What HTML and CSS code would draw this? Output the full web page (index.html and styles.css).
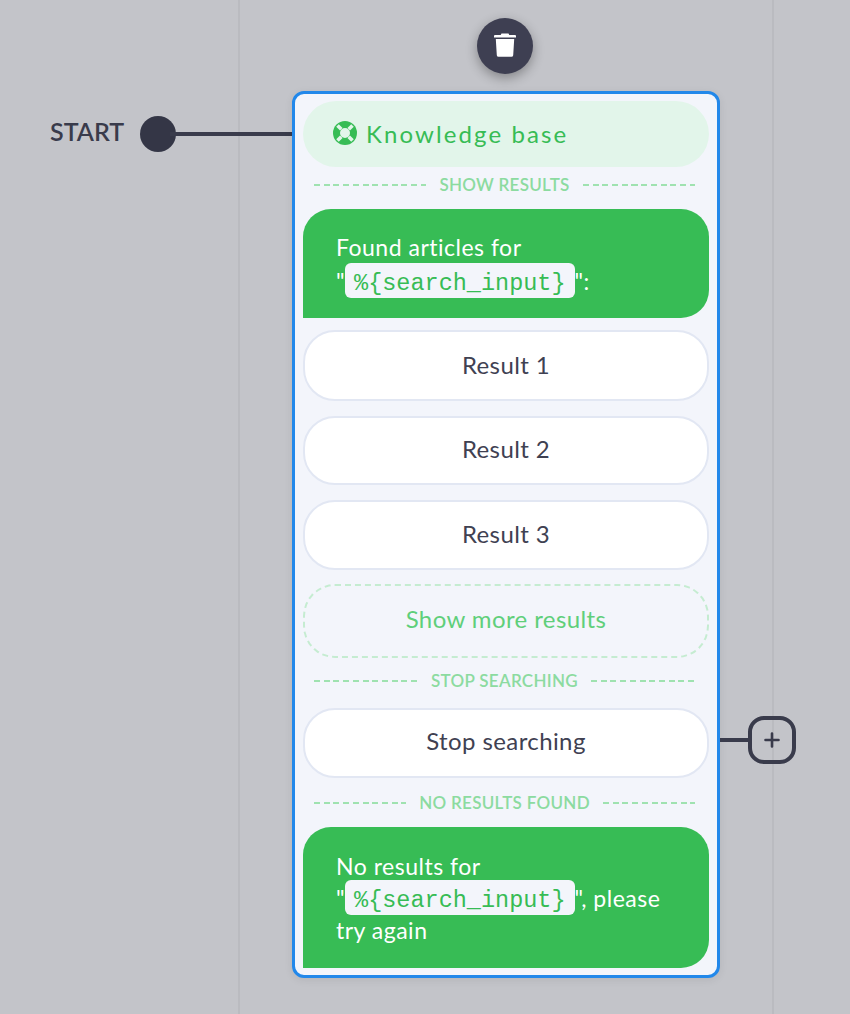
FILE: index.html
```html
<!DOCTYPE html>
<html lang="en">
<head>
    <meta charset="UTF-8">
    <meta name="viewport" content="width=device-width, initial-scale=1.0">
    <title>Knowledge base block</title>
    <link rel="stylesheet" href="styles.css">
</head>
<body>
    <div class="canvas">
        <div class="guide guide-left"></div>
        <div class="guide guide-right"></div>

        <button class="delete-btn" aria-label="Delete">
            <svg width="22" height="24" viewBox="0 0 22 24">
                <path fill="#fff" d="M7.500 0.500h7l.8 1.500H21a1 1 0 0 1 1 1v1.500H0V3a1 1 0 0 1 1-1h5.700z"/>
                <path fill="#fff" d="M1.800 6h18.400l-1 16.200a1.800 1.800 0 0 1-1.800 1.600H4.600a1.800 1.800 0 0 1-1.800-1.600z"/>
            </svg>
        </button>

        <div class="start-label">START</div>
        <div class="start-dot"></div>
        <div class="start-line"></div>

        <div class="node">
            <div class="node-title">
                <svg class="title-icon" width="24" height="24" viewBox="0 0 24 24">
                    <circle cx="12" cy="12" r="12" fill="#37bc55"/>
                    <path stroke="#e2f5ea" stroke-width="3.600" d="M4.500 4.500l3.800 3.800M19.500 4.500l-3.800 3.800M4.500 19.500l3.800-3.800M19.500 19.500l-3.800-3.800"/>
                    <circle cx="12" cy="12" r="5" fill="#e2f5ea"/>
                </svg>
                <span>Knowledge base</span>
            </div>

            <div class="divider divider-first"><span>SHOW RESULTS</span></div>

            <div class="message message-found">
                Found articles for<br>"<code>%{search_input}</code>":
            </div>

            <div class="option option-1">Result 1</div>
            <div class="option option-2">Result 2</div>
            <div class="option option-3">Result 3</div>
            <div class="option option-more">Show more results</div>

            <div class="divider divider-stop"><span>STOP SEARCHING</span></div>

            <div class="option option-stop">Stop searching</div>

            <div class="divider divider-none"><span>NO RESULTS FOUND</span></div>

            <div class="message message-none">
                No results for<br>"<code>%{search_input}</code>", please<br>try again
            </div>
        </div>

        <div class="add-line"></div>
        <button class="add-btn" aria-label="Add">
            <svg width="16" height="16" viewBox="0 0 16 16">
                <path stroke="#393b4b" stroke-width="2.600" stroke-linecap="round" d="M8 1.500v13M1.500 8h13"/>
            </svg>
        </button>
    </div>
</body>
</html>
```

FILE: styles.css
```css
body {
    margin: 0;
    font-family: Lato, 'Noto Sans', sans-serif;
    background-color: #c3c4c9;
}
.canvas {
    position: relative;
    width: 850px;
    height: 1014px;
    overflow: hidden;
}
.guide {
    position: absolute;
    top: 0;
    bottom: 0;
    width: 2px;
    background-color: #babbc0;
}
.guide-left {
    left: 238px;
}
.guide-right {
    left: 772px;
}
.delete-btn {
    position: absolute;
    left: 477px;
    top: 18px;
    width: 56px;
    height: 56px;
    padding: 0 0 2px;
    border: none;
    border-radius: 50%;
    background-color: #3e3f52;
    box-shadow: 0 4px 12px rgba(0, 0, 0, 0.32);
    display: flex;
    align-items: center;
    justify-content: center;
}
.start-label {
    position: absolute;
    left: 50px;
    top: 117px;
    font-size: 25px;
    line-height: 28px;
    font-weight: 600;
    color: #393b4b;
}
.start-dot {
    position: absolute;
    left: 140px;
    top: 116px;
    width: 36px;
    height: 36px;
    border-radius: 50%;
    background-color: #343646;
}
.start-line {
    position: absolute;
    left: 170px;
    top: 132px;
    width: 124px;
    height: 4px;
    background-color: #393b4b;
}
.node {
    position: absolute;
    left: 292px;
    top: 91px;
    width: 428px;
    height: 887px;
    box-sizing: border-box;
    border: 3px solid #2288ea;
    border-radius: 12px;
    background-color: #f3f5fb;
    padding: 7px 8px;
    box-shadow: 0 2px 8px rgba(0, 0, 0, 0.08);
}
.node-title {
    height: 66px;
    border-radius: 33px;
    background-color: #e2f5ea;
    color: #37bc55;
    display: flex;
    align-items: center;
    padding: 0 0 2px 30px;
    box-sizing: border-box;
    font-size: 24px;
    letter-spacing: 2.100px;
}
.title-icon {
    margin-right: 9px;
}
.divider {
    display: flex;
    align-items: center;
    gap: 13px;
    margin: 0 14px 0 11px;
    height: 20px;
    font-size: 17px;
    letter-spacing: 0.300px;
    font-weight: 600;
    color: #8cdba0;
}
.divider::before, .divider::after {
    content: "";
    flex: 1;
    height: 2px;
    margin-top: 2px;
    background-image: repeating-linear-gradient(90deg, #9fe2b0 0 6px, transparent 6px 9.700px);
}
.divider-first {
    margin-top: 7px;
    margin-bottom: 15px;
}
.divider-stop {
    margin-top: 12px;
    margin-bottom: 18px;
}
.divider-none {
    margin-top: 14px;
    margin-bottom: 15px;
}
.message {
    box-sizing: border-box;
    background-color: #37bc55;
    color: #fff;
    border-radius: 28px 28px 28px 0;
    padding: 22px 33px;
    font-size: 23px;
    letter-spacing: 0.500px;
}
.message-found {
    height: 109px;
    line-height: 34px;
    padding-top: 21px;
}
.message-none {
    height: 141px;
    line-height: 32px;
    padding-top: 23px;
}
.message code {
    font-family: 'Liberation Mono', monospace;
    font-size: 23.500px;
    line-height: 20px;
    letter-spacing: 0;
    padding: 7px 9px 1px;
    border-radius: 6px;
    background-color: #f3f5fb;
    color: #37bc55;
}
.option {
    box-sizing: border-box;
    height: 70px;
    padding-bottom: 4px;
    border: 2px solid #e2e7f3;
    border-radius: 32px;
    background-color: #fff;
    color: #3f4152;
    display: flex;
    align-items: center;
    justify-content: center;
    font-size: 24px;
    letter-spacing: 0.400px;
}
.option-1 {
    margin-top: 12px;
    height: 71px;
    padding-bottom: 2px;
}
.option-2 {
    margin-top: 15px;
    height: 69px;
}
.option-3 {
    margin-top: 15px;
}
.option-more {
    margin-top: 14px;
    height: 74px;
    padding-bottom: 6px;
    background-color: transparent;
    border: 2px dashed #c5ecd1;
    color: #5fcf7a;
}
.option-stop {
    padding-bottom: 6px;
}
.add-line {
    position: absolute;
    left: 720px;
    top: 738px;
    width: 30px;
    height: 4px;
    background-color: #393b4b;
}
.add-btn {
    position: absolute;
    left: 748px;
    top: 716px;
    width: 48px;
    height: 48px;
    box-sizing: border-box;
    padding: 0;
    border: 4px solid #393b4b;
    border-radius: 16px;
    background-color: transparent;
    display: flex;
    align-items: center;
    justify-content: center;
}
```
